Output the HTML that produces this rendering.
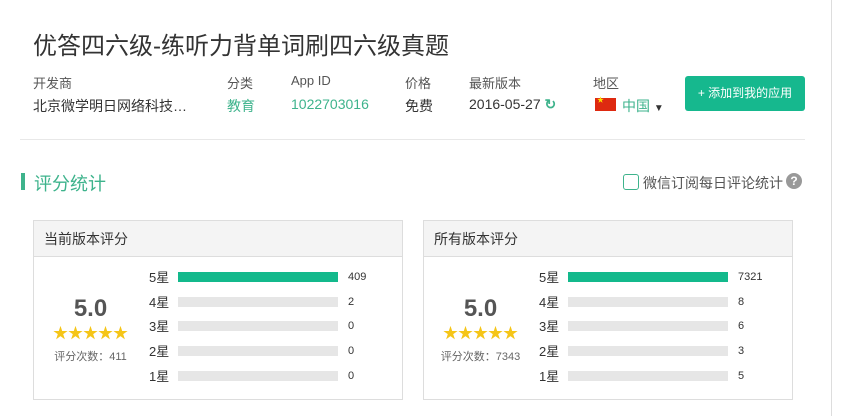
<!DOCTYPE html>
<html><head><meta charset="utf-8"><style>
*{margin:0;padding:0;box-sizing:border-box}
body{width:859px;height:416px;background:#fff;font-family:"Liberation Sans","Noto Sans CJK SC",sans-serif;color:#333;position:relative;overflow:hidden}
.a{position:absolute;white-space:nowrap}
.lbl{font-size:13px;color:#555}
.val{font-size:14px;color:#333}
.g{color:#3eb38c}
.panel{position:absolute;top:220px;width:370px;height:180px;border:1px solid #ddd}
.ph{height:36px;background:#f4f4f4;border-bottom:1px solid #ddd;font-size:14px;line-height:36px;padding-left:10px;color:#333}
.row{position:absolute;left:115px;width:240px;height:14px;font-size:12px;white-space:nowrap}
.row .s{position:absolute;left:0;top:-3px;font-size:13px;color:#333;white-space:nowrap}
.row .b{position:absolute;left:29px;top:2px;width:160px;height:10px;background:#e6e6e6}
.row .f{height:10px;background:#13b98c}
.row .n{position:absolute;left:199px;top:1px;font-size:11px;color:#333}
.score{position:absolute;left:0;width:113px;text-align:center;white-space:nowrap}
</style></head><body>
<div class="a" style="left:831px;top:0;width:1px;height:416px;background:#ddd"></div>
<div class="a" style="left:33px;top:26px;font-size:24px;color:#333">优答四六级-练听力背单词刷四六级真题</div>

<div class="a lbl" style="left:33px;top:73px">开发商</div>
<div class="a val" style="left:33px;top:96px">北京微学明日网络科技…</div>
<div class="a lbl" style="left:227px;top:73px">分类</div>
<div class="a val g" style="left:227px;top:96px">教育</div>
<div class="a lbl" style="left:291px;top:73px">App ID</div>
<div class="a val g" style="left:291px;top:96px">1022703016</div>
<div class="a lbl" style="left:405px;top:73px">价格</div>
<div class="a val" style="left:405px;top:96px">免费</div>
<div class="a lbl" style="left:469px;top:73px">最新版本</div>
<div class="a val" style="left:469px;top:96px">2016-05-27 <span class="g" style="font-weight:bold">↻</span></div>
<div class="a lbl" style="left:593px;top:73px">地区</div>
<div class="a" style="left:595px;top:98px;width:21px;height:13px;background:#de2910"><span style="position:absolute;left:2px;top:-3px;color:#ffde00;font-size:7px">★</span></div>
<div class="a val g" style="left:622px;top:96px">中国 <span style="color:#333;font-size:10px">▼</span></div>
<div class="a" style="left:685px;top:76px;width:120px;height:35px;background:#16b88e;border-radius:3px;color:#fff;font-size:12px;line-height:35px;text-align:center">+ 添加到我的应用</div>

<div class="a" style="left:20px;top:139px;width:785px;height:1px;background:#e8e8e8"></div>

<div class="a" style="left:21px;top:173px;width:4px;height:17px;background:#3eb38c"></div>
<div class="a g" style="left:34px;top:170px;font-size:18px">评分统计</div>
<div class="a" style="left:623px;top:174px;width:16px;height:16px;border:1px solid #3eb38c;border-radius:3px"></div>
<div class="a" style="left:643px;top:173px;font-size:14px;color:#555">微信订阅每日评论统计</div>
<div class="a" style="left:786px;top:173px;width:16px;height:16px;border-radius:50%;background:#999;color:#fff;font-size:12px;font-weight:bold;text-align:center;line-height:16px">?</div>

<div class="panel" style="left:33px">
<div class="ph">当前版本评分</div>
<div class="score" style="top:74px;font-size:24px;font-weight:bold;color:#555">5.0</div>
<div class="score" style="top:101px;font-size:15px;color:#f5c518">★★★★★</div>
<div class="score" style="top:127px;font-size:11px;color:#666">评分次数：411</div>
<div class="row" style="top:49px"><span class="s">5星</span><div class="b"><div class="f" style="width:160px"></div></div><span class="n">409</span></div>
<div class="row" style="top:74px"><span class="s">4星</span><div class="b"></div><span class="n">2</span></div>
<div class="row" style="top:98px"><span class="s">3星</span><div class="b"></div><span class="n">0</span></div>
<div class="row" style="top:123px"><span class="s">2星</span><div class="b"></div><span class="n">0</span></div>
<div class="row" style="top:148px"><span class="s">1星</span><div class="b"></div><span class="n">0</span></div>
</div>

<div class="panel" style="left:423px">
<div class="ph">所有版本评分</div>
<div class="score" style="top:74px;font-size:24px;font-weight:bold;color:#555">5.0</div>
<div class="score" style="top:101px;font-size:15px;color:#f5c518">★★★★★</div>
<div class="score" style="top:127px;font-size:11px;color:#666">评分次数：7343</div>
<div class="row" style="top:49px"><span class="s">5星</span><div class="b"><div class="f" style="width:160px"></div></div><span class="n">7321</span></div>
<div class="row" style="top:74px"><span class="s">4星</span><div class="b"></div><span class="n">8</span></div>
<div class="row" style="top:98px"><span class="s">3星</span><div class="b"></div><span class="n">6</span></div>
<div class="row" style="top:123px"><span class="s">2星</span><div class="b"></div><span class="n">3</span></div>
<div class="row" style="top:148px"><span class="s">1星</span><div class="b"></div><span class="n">5</span></div>
</div>
</body></html>
